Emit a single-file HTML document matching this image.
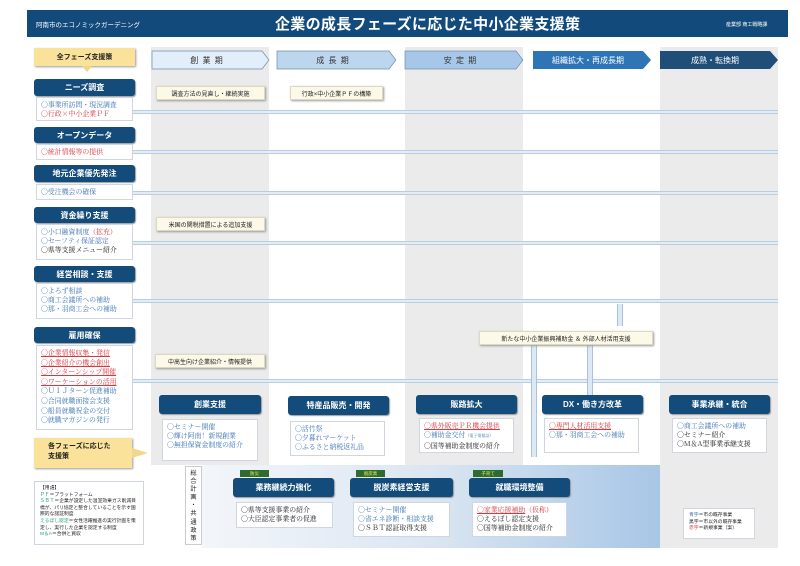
<!DOCTYPE html>
<html><head><meta charset="utf-8"><style>
*{margin:0;padding:0;box-sizing:border-box}
body{width:800px;height:566px;background:#fff;position:relative;overflow:hidden;font-family:"Liberation Sans","Noto Sans CJK JP",sans-serif;color:#222}
.a{position:absolute}
.col{position:absolute;background:#ebebeb}
.hd{position:absolute;background:#134b7a;color:#fff;font-size:8px;font-weight:bold;text-align:center;border-radius:3px;display:flex;align-items:center;justify-content:center;box-shadow:1px 1px 1px #999}
.bx{position:absolute;background:#fff;border:1px solid #cfd6df;font-size:6.9px;line-height:9.2px;padding:2px 4px;font-family:"Noto Serif CJK SC","Noto Sans CJK JP",serif;white-space:nowrap}
.b{color:#3a72b4}.r{color:#d9363e}.ru{color:#d9363e;text-decoration:underline}.k{color:#222}
.note{position:absolute;background:#fdf9e8;border:1px solid #ddd8c0;font-size:6px;text-align:center;display:flex;align-items:center;justify-content:center;box-shadow:1px 1px 2px #999;white-space:nowrap}
.ar{position:absolute;left:132px;width:646px;height:4px;border-top:1px solid #b8cce2;border-bottom:1px solid #b8cce2;background:#e4edf6}
.ph{position:absolute;height:18px;font-size:8px;display:flex;align-items:center;justify-content:center;letter-spacing:1px}
.tag{position:absolute;height:7px;background:#2f6b2f;color:#e8f25a;font-size:4.5px;text-align:center;line-height:7px}
.va{position:absolute;width:6px;background:#dce8f4;border-left:1px solid #a9c1dc;border-right:1px solid #a9c1dc}
</style></head><body>
<div class="a" style="left:27px;top:10px;width:761px;height:27px;background:#124b7b"></div>
<div class="a" style="left:36px;top:19px;color:#fff;font-size:6.5px">阿南市のエコノミックガーデニング</div>
<div class="a" style="left:275px;top:13px;color:#fff;font-size:15px;font-weight:bold;letter-spacing:0.3px">企業の成長フェーズに応じた中小企業支援策</div>
<div class="a" style="left:726px;top:21px;color:#fff;font-size:5px">産業部 商工戦略課</div>

<div class="col" style="left:151px;top:47px;width:118px;height:418px"></div>
<div class="col" style="left:405px;top:47px;width:118px;height:418px"></div>
<div class="col" style="left:660px;top:47px;width:118px;height:501px"></div>
<div class="a" style="left:202px;top:465px;width:458px;height:83px;background:linear-gradient(90deg,#f3f6fa 0%,#dbe6f2 50%,#a8c6e6 100%)"></div>

<svg class="a" style="left:0;top:0" width="800" height="80">
<polygon points="152,51 262,51 269,60 262,69 152,69" fill="#e2eef9" stroke="#6d8fb0" stroke-width="0.7"/>
<polygon points="277,51 389,51 396,60 389,69 277,69" fill="#bcd6ee" stroke="#6d8fb0" stroke-width="0.7"/>
<polygon points="405,51 516,51 523,60 516,69 405,69" fill="#a7c7e8" stroke="#6d8fb0" stroke-width="0.7"/>
<polygon points="533,51 643,51 651,60 643,69 533,69" fill="#2e75b6"/>
<polygon points="660,51 770,51 778,60 770,69 660,69" fill="#1f4e79"/>
</svg>
<div class="ph" style="left:152px;top:51px;width:110px;color:#333">創 業 期</div>
<div class="ph" style="left:277px;top:51px;width:112px;color:#333">成 長 期</div>
<div class="ph" style="left:405px;top:51px;width:111px;color:#333">安 定 期</div>
<div class="ph" style="left:533px;top:51px;width:110px;color:#fff;letter-spacing:0">組織拡大・再成長期</div>
<div class="ph" style="left:660px;top:51px;width:110px;color:#fff;letter-spacing:0">成熟・転換期</div>

<div class="ar" style="top:110px"></div>
<div class="ar" style="top:150px"></div>
<div class="ar" style="top:191px"></div>
<div class="ar" style="top:241px"></div>
<div class="ar" style="top:299px"></div>
<div class="ar" style="top:379px"></div>

<div class="a" style="left:34px;top:48px;width:101px;height:18px;background:#fbe29a;font-size:7px;font-weight:bold;display:flex;align-items:center;justify-content:center;box-shadow:1px 1px 2px #999">全フェーズ支援策</div>
<div class="a" style="left:82px;top:66px;width:0;height:0;border-left:5px solid transparent;border-right:5px solid transparent;border-top:6px solid #f0d488"></div>

<div class="hd" style="left:34px;top:79px;width:101px;height:17px">ニーズ調査</div>
<div class="bx" style="left:36px;top:97px;width:97px;height:24px"><span class="b">〇事業所訪問・現況調査</span><br><span class="r">〇行政×中小企業ＰＦ</span></div>
<div class="hd" style="left:34px;top:127px;width:101px;height:16px">オープンデータ</div>
<div class="bx" style="left:36px;top:144px;width:97px;height:16px"><span class="r">〇統計情報等の提供</span></div>
<div class="hd" style="left:34px;top:165px;width:101px;height:17px">地元企業優先発注</div>
<div class="bx" style="left:36px;top:184px;width:97px;height:16px"><span class="b">〇受注機会の確保</span></div>
<div class="hd" style="left:34px;top:207px;width:101px;height:16px">資金繰り支援</div>
<div class="bx" style="left:36px;top:224px;width:97px;height:36px"><span class="b">〇小口融資制度</span><span class="r">（拡充）</span><br><span class="b">〇セーフティ保証認定</span><br><span class="k">〇県等支援メニュー紹介</span></div>
<div class="hd" style="left:34px;top:266px;width:101px;height:16px">経営相談・支援</div>
<div class="bx" style="left:36px;top:283px;width:97px;height:36px"><span class="b">〇よろず相談<br>〇商工会議所への補助<br>〇那・羽商工会への補助</span></div>
<div class="hd" style="left:34px;top:327px;width:101px;height:16px">雇用確保</div>
<div class="bx" style="left:36px;top:345px;width:97px;height:85px;line-height:9.6px"><span class="ru">〇企業情報収集・発信</span><br><span class="ru">〇企業紹介の機会創出</span><br><span class="ru">〇インターンシップ開催</span><br><span class="ru">〇ワーケーションの活用</span><br><span class="b">〇ＵＩＪターン促進補助<br>〇合同就職面接会支援<br>〇船員就職祝金の交付<br>〇就職マガジンの発行</span></div>

<div class="a" style="left:34px;top:438px;width:98px;height:30px;background:#fbe29a;font-size:7px;font-weight:bold;padding:4px 0 0 14px;line-height:10px;box-shadow:1px 1px 2px #999">各フェーズに応じた<br>支援策</div>
<div class="a" style="left:132px;top:448px;width:0;height:0;border-top:5px solid transparent;border-bottom:5px solid transparent;border-left:16px solid #f3d68a"></div>

<div class="bx" style="left:34px;top:481px;width:110px;height:64px;font-family:'Liberation Sans','Noto Sans CJK JP',sans-serif;font-size:4.8px;line-height:6.6px;padding:4px 5px;white-space:normal">【用語】<br><span style="color:#2aa07a">ＰＦ</span>＝プラットフォーム<br><span style="color:#2aa07a">ＳＢＴ</span>＝企業が設定した温室効果ガス削減目標が、パリ協定と整合していることを示す国際的な認証制度<br><span style="color:#2aa07a">えるぼし認定</span>＝女性活躍推進の実行計画を策定し、実行した企業を認定する制度<br><span style="color:#2aa07a">M＆A</span>＝合併と買収</div>

<div class="note" style="left:156px;top:86px;width:109px;height:14px">調査方法の見直し・継続実施</div>
<div class="note" style="left:290px;top:86px;width:93px;height:14px">行政×中小企業ＰＦの構築</div>
<div class="note" style="left:156px;top:217px;width:109px;height:14px">米国の関税措置による追加支援</div>
<div class="note" style="left:155px;top:354px;width:110px;height:14px">中高生向け企業紹介・情報提供</div>

<div class="va" style="left:617px;top:304px;height:22px"></div>
<div class="va" style="left:531px;top:345px;height:112px"></div>
<div class="va" style="left:587px;top:345px;height:50px"></div>
<div class="note" style="left:479px;top:331px;width:174px;height:14px">新たな中小企業振興補助金 ＆ 外部人材活用支援</div>

<div class="hd" style="left:159px;top:395px;width:102px;height:19px">創業支援</div>
<div class="bx" style="left:162px;top:419px;width:96px;height:42px"><span class="b">〇セミナー開催<br>〇輝け阿南！新規創業<br>〇無担保資金制度の紹介</span></div>
<div class="hd" style="left:288px;top:396px;width:101px;height:19px">特産品販売・開発</div>
<div class="bx" style="left:290px;top:421px;width:95px;height:35px"><span class="b">〇活竹祭<br>〇夕暮れマーケット<br>〇ふるさと納税返礼品</span></div>
<div class="hd" style="left:416px;top:395px;width:101px;height:19px">販路拡大</div>
<div class="bx" style="left:419px;top:418px;width:95px;height:35px"><span class="ru">〇県外販売ＰＲ機会提供</span><br><span class="b">〇補助金交付</span><span class="b" style="font-size:4px">（電子情報誌）</span><br><span class="k">〇国等補助金制度の紹介</span></div>
<div class="hd" style="left:542px;top:395px;width:101px;height:19px">DX・働き方改革</div>
<div class="bx" style="left:544px;top:418px;width:95px;height:35px"><span class="ru">〇専門人材活用支援</span><br><span class="b">〇那・羽商工会への補助</span></div>
<div class="hd" style="left:669px;top:395px;width:101px;height:19px">事業承継・統合</div>
<div class="bx" style="left:672px;top:418px;width:95px;height:35px"><span class="b">〇商工会議所への補助</span><br>〇セミナー紹介<br>〇M＆A型事業承継支援</div>

<div class="a" style="left:185px;top:466px;width:17px;height:79px;background:#fff;border:1px solid #ccc;font-size:6.2px;line-height:8.1px;text-align:center;padding-top:3px">総<br>合<br>計<br>画<br>・<br>共<br>通<br>政<br>策</div>

<div class="tag" style="left:240px;top:470px;width:29px">防災</div>
<div class="hd" style="left:233px;top:478px;width:101px;height:19px">業務継続力強化</div>
<div class="bx" style="left:236px;top:502px;width:97px;height:26px">〇県等支援事業の紹介<br>〇大臣認定事業者の促進</div>
<div class="tag" style="left:356px;top:470px;width:29px">脱炭素</div>
<div class="hd" style="left:350px;top:478px;width:103px;height:19px">脱炭素経営支援</div>
<div class="bx" style="left:353px;top:502px;width:97px;height:35px"><span class="b">〇セミナー開催<br>〇省エネ診断・相談支援</span><br>〇ＳＢＴ認証取得支援</div>
<div class="tag" style="left:473px;top:470px;width:30px">子育て</div>
<div class="hd" style="left:469px;top:478px;width:101px;height:19px">就職環境整備</div>
<div class="bx" style="left:472px;top:502px;width:95px;height:35px"><span class="ru">〇家業応援補助</span><span class="r">（仮称）</span><br>〇えるぼし認定支援<br>〇国等補助金制度の紹介</div>

<div class="bx" style="left:683px;top:508px;width:72px;height:31px;font-family:'Liberation Sans','Noto Sans CJK JP',sans-serif;font-size:4.8px;line-height:6.6px;padding:4px 5px"><span class="b">青字</span>＝市の既存事業<br>黒字＝市以外の既存事業<br><span class="r">赤字</span>＝新規事業（案）</div>
</body></html>
